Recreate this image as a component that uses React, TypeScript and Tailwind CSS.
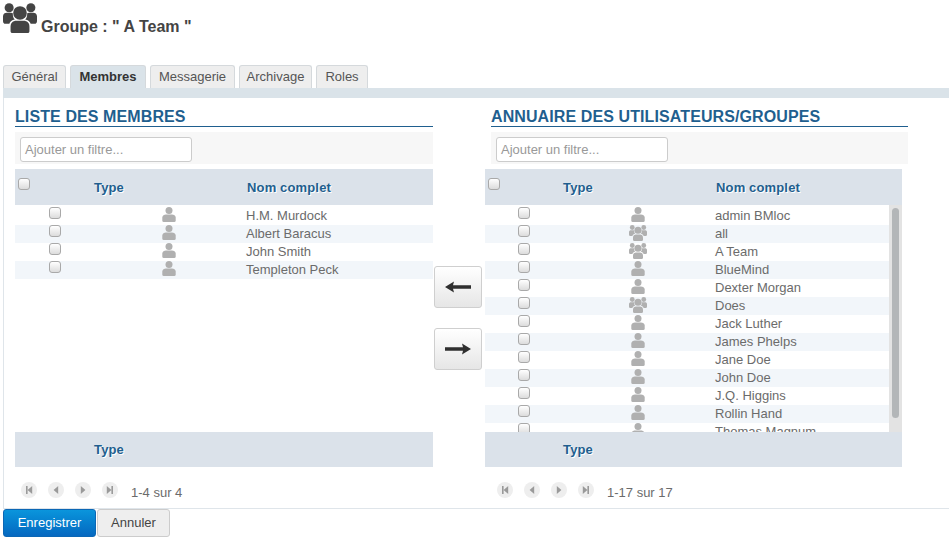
const font = "font-['Liberation_Sans',Arial,sans-serif]";

const tabs = [
  { label: "Général", width: "w-[63px]" },
  { label: "Membres", width: "w-[76px]", active: true },
  { label: "Messagerie", width: "w-[85px]" },
  { label: "Archivage", width: "w-[73px]" },
  { label: "Roles", width: "w-[52px]" },
];

const members = [
  { name: "H.M. Murdock" },
  { name: "Albert Baracus" },
  { name: "John Smith" },
  { name: "Templeton Peck" },
];

const directory = [
  { name: "admin BMloc" },
  { name: "all", group: true },
  { name: "A Team", group: true },
  { name: "BlueMind" },
  { name: "Dexter Morgan" },
  { name: "Does", group: true },
  { name: "Jack Luther" },
  { name: "James Phelps" },
  { name: "Jane Doe" },
  { name: "John Doe" },
  { name: "J.Q. Higgins" },
  { name: "Rollin Hand" },
  { name: "Thomas Magnum" },
];

const PersonIcon = () => (
  <svg width="14" height="15" viewBox="0 0 14 15" className="fill-[#b0b0b0]">
    <circle cx="7" cy="3.5" r="3.5" />
    <path d="M0.3 13.8V10.6C0.3 8.6 2.2 7.4 4 7.4H10C11.8 7.4 13.7 8.6 13.7 10.6V13.8C13.7 14.5 13.2 15 12.5 15H1.5C0.8 15 0.3 14.5 0.3 13.8Z" />
  </svg>
);

const GroupIcon = ({ size = 18, color = "fill-[#b0b0b0]" }: { size?: number; color?: string }) => (
  <svg width={size} height={size * 0.89} viewBox="0 0 36 32" className={color}>
    <circle cx="6.5" cy="5" r="4.8" />
    <circle cx="29.5" cy="5" r="4.8" />
    <path d="M0 19V14C0 11.5 2 10.3 4 10.3H8.5C9.2 10.3 9.8 10.5 10.4 10.8C10.2 14 11 16 12.5 17.4C9.4 17.9 7.4 19.5 6.7 22H2.5C1 22 0 20.8 0 19Z" />
    <path d="M36 19V14C36 11.5 34 10.3 32 10.3H27.5C26.8 10.3 26.2 10.5 25.6 10.8C25.8 14 25 16 23.5 17.4C26.6 17.9 28.6 19.5 29.3 22H33.5C35 22 36 20.8 36 19Z" />
    <circle cx="18" cy="10.5" r="7.2" />
    <path d="M8 29.5V25C8 21 10.8 18.8 14 18.8H22C25.2 18.8 28 21 28 25V29.5C28 31 27 32 25.5 32H10.5C9 32 8 31 8 29.5Z" />
  </svg>
);

const Check = () => (
  <input
    type="checkbox"
    readOnly
    className="block h-3 w-3 appearance-none rounded-[3px] border border-[#a9a9a9] bg-gradient-to-b from-white to-[#dcdcdc]"
  />
);

const PagerButton = ({ d }: { d: string }) => (
  <span className="flex h-4 w-4 items-center justify-center rounded-full bg-[#eeeeee]">
    <svg width="8" height="8" viewBox="0 0 8 8" className="fill-[#9a9a9a]">
      <path d={d} />
    </svg>
  </span>
);

const Pager = ({ label }: { label: string }) => (
  <div className="flex h-[41px] items-start pt-[15px]">
    <div className="flex gap-[11px]">
      <PagerButton d="M1 0H2.6V8H1ZM7.2 0V8L2.6 4Z" />
      <PagerButton d="M6.2 0V8L1.6 4Z" />
      <PagerButton d="M1.8 0V8L6.4 4Z" />
      <PagerButton d="M7 0H5.4V8H7ZM0.8 0V8L5.4 4Z" />
    </div>
    <span className="ml-[13px] mt-[3px] text-[13px] leading-[15px] text-[#6b6b6b]">{label}</span>
  </div>
);

type Row = { name: string; group?: boolean };

const Table = ({ rows, scroll }: { rows: Row[]; scroll?: boolean }) => (
  <div className="w-full">
    <div className="flex h-9 bg-[#dbe2ea] text-[13px] font-bold leading-[15px] tracking-[0.15px] text-[#1f5f8f] [text-shadow:1px_1px_0_#fff]">
      <div className={`${scroll ? "w-[78px]" : "w-[79px]"} pl-[3px] pt-[9px]`}>
        <Check />
      </div>
      <div className="w-[153px] pt-[11px]">Type</div>
      <div className="pt-[11px]">Nom complet</div>
    </div>
    <div className="flex h-[227px]">
      <div className="h-full min-w-0 flex-1 overflow-hidden">
        {rows.map((row, i) => (
          <div
            key={row.name}
            className={`flex text-[13px] leading-[15px] text-[#6b6b6b] ${i === 0 ? "h-5 pt-[2px]" : "h-[18px]"} ${
              i % 2 === 1 ? "bg-[#f2f6fa]" : "bg-white"
            }`}
          >
            <div className={`flex ${scroll ? "w-[78px]" : "w-[79px]"} justify-center`}>
              <Check />
            </div>
            <div className="flex h-[15px] w-[152px] justify-center pr-[3px]">
              {row.group ? <GroupIcon /> : <PersonIcon />}
            </div>
            <div className="pt-px">{row.name}</div>
          </div>
        ))}
      </div>
      {scroll && (
        <div className="w-[13px] bg-[#e3e3e3] px-[3px] pt-[3px]">
          <div className="h-[210px] rounded-full bg-[#b3b6b8]" />
        </div>
      )}
    </div>
    <div className="flex h-[35px] bg-[#dbe2ea] text-[13px] font-bold leading-[15px] tracking-[0.15px] text-[#1f5f8f] [text-shadow:1px_1px_0_#fff]">
      <div className={`${scroll ? "ml-[78px]" : "ml-[79px]"} pt-[10px]`}>Type</div>
    </div>
  </div>
);

const Panel = ({
  title,
  rows,
  pager,
  scroll,
  inset,
}: {
  title: string;
  rows: Row[];
  pager: string;
  scroll?: boolean;
  inset?: boolean;
}) => (
  <div className={inset ? "w-[423px]" : "w-[418px]"}>
    <div className={inset ? "ml-[6px]" : ""}>
      <h2 className="h-[29px] border-b border-[#1f5f8f] pt-[10px] text-[16px] font-bold leading-[18px] tracking-[0.1px] text-[#1f5f8f]">
        {title}
      </h2>
      <div className="mt-[5px] h-8 bg-[#f7f7f7] pl-[5px] pt-[5px]">
        <div className="flex h-[25px] w-[172px] items-center rounded-[3px] border border-[#cccccc] bg-white pl-[4px] text-[13px] text-[#999]">
          Ajouter un filtre...
        </div>
      </div>
    </div>
    <div className={`mt-[5px] ${inset ? "w-[417px]" : ""}`}>
      <Table rows={rows} scroll={scroll} />
      <div className={inset ? "pl-[12px]" : "pl-[6px]"}>
        <Pager label={pager} />
      </div>
    </div>
  </div>
);

const ArrowButton = ({ d }: { d: string }) => (
  <button className="flex h-[42px] w-[48px] items-center justify-center rounded-[3px] border border-[#cfcfcf] bg-gradient-to-b from-white to-[#e6e6e6]">
    <svg width="26" height="12" viewBox="0 0 26 12" className="fill-[#2f2f2f]">
      <path d={d} />
    </svg>
  </button>
);

export default function App() {
  return (
    <div className={`${font} h-[540px] w-[949px] overflow-hidden bg-white`}>
      <div className="flex h-[65px] items-start pl-[3px] pt-[3px]">
        <GroupIcon size={34} color="fill-[#444444]" />
        <h1 className="ml-1 mt-[15px] text-[16px] font-bold leading-[18px] text-[#444]">
          Groupe : " A Team "
        </h1>
      </div>

      <div className="flex gap-1 pl-[3px]">
        {tabs.map((tab) => (
          <div
            key={tab.label}
            className={`flex h-[23px] items-center justify-center rounded-t-[3px] border border-b-0 border-[#d5d9dc] text-[13px] ${tab.width} ${
              tab.active ? "bg-[#dae3e9] font-bold text-[#333]" : "bg-[#eeeeee] text-[#555]"
            }`}
          >
            {tab.label}
          </div>
        ))}
      </div>
      <div className="ml-[3px] h-[10px] bg-[#dae3e9]" />

      <div className="ml-[3px] flex h-[411px] border-b border-l border-[#dfe5ea] pl-[11px]">
        <Panel title="LISTE DES MEMBRES" rows={members} pager="1-4 sur 4" />
        <div className="flex w-[52px] flex-col gap-5 pl-px pt-[168px]">
          <ArrowButton d="M0 6L9 0.5L8 4.2H26V7.8H8L9 11.5Z" />
          <ArrowButton d="M26 6L17 0.5L18 4.2H0V7.8H18L17 11.5Z" />
        </div>
        <Panel title="ANNUAIRE DES UTILISATEURS/GROUPES" rows={directory} pager="1-17 sur 17" scroll inset />
      </div>

      <div className="ml-[3px] flex">
        <button className="h-[28px] w-[93px] rounded-[3px] border border-[#0b67b5] bg-gradient-to-b from-[#0b95dc] to-[#0668c0] text-[13px] text-white">
          Enregistrer
        </button>
        <button className="ml-px h-[28px] w-[73px] rounded-[3px] border border-[#cccccc] bg-[#eeeeee] text-[13px] text-[#444]">
          Annuler
        </button>
      </div>
    </div>
  );
}
